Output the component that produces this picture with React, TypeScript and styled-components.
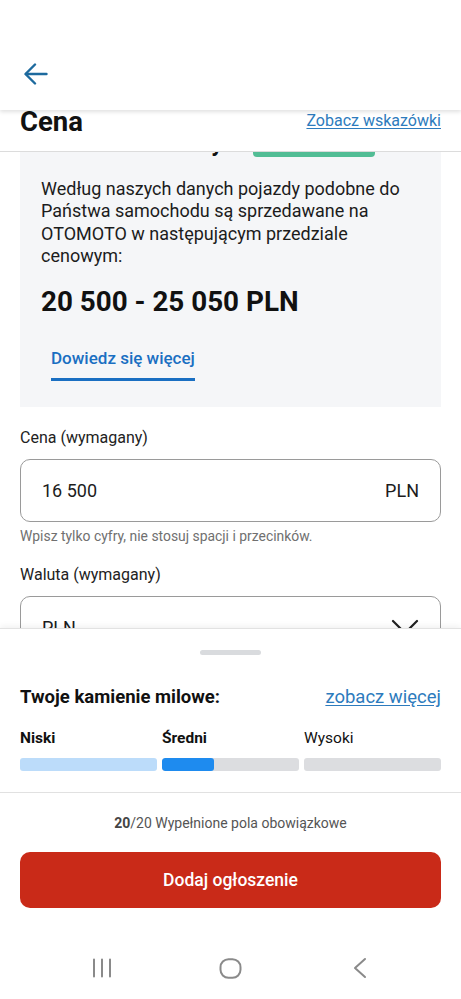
import { useLayoutEffect, useRef } from 'react';
import styled, { createGlobalStyle } from 'styled-components';

const GlobalStyle = createGlobalStyle`
  html, body {
    margin: 0;
    padding: 0;
    background: #ffffff;
  }
  * {
    box-sizing: border-box;
  }
  body {
    font-family: Roboto, 'Noto Sans', 'Liberation Sans', sans-serif;
    color: #1a1a1a;
  }
`;

const Screen = styled.div`
  width: 461px;
  height: 999px;
  display: flex;
  flex-direction: column;
  overflow: hidden;
  background: #ffffff;
`;

const Header = styled.header`
  height: 110px;
  flex-shrink: 0;
  display: flex;
  align-items: flex-end;
  padding: 0 0 23px 22px;
  background: #ffffff;
  box-shadow: 0 2px 4px rgba(0, 0, 0, 0.12);
  position: relative;
  z-index: 2;
`;

const BackButton = styled.button`
  border: none;
  background: none;
  padding: 0;
  width: 28px;
  height: 26px;
  display: flex;
  align-items: center;
  justify-content: center;
  color: #1d6a9e;
`;

const TitleBar = styled.div`
  height: 42px;
  flex-shrink: 0;
  display: flex;
  justify-content: space-between;
  align-items: flex-start;
  padding: 0 20px;
  background: #ffffff;
  border-bottom: 1px solid #dcdcdc;
  position: relative;
  z-index: 1;
`;

const PageTitle = styled.h1`
  margin: 0;
  font-size: 27.5px;
  line-height: 24px;
  font-weight: 700;
  color: #111;
`;

const TextLink = styled.a<{ size: number }>`
  font-size: ${({ size }) => size}px;
  line-height: 22px;
  color: #2d7bbd;
  text-decoration: underline;
  text-underline-offset: 2px;
  cursor: pointer;
`;

const ScrollArea = styled.div`
  flex: 1;
  overflow: hidden;
  padding: 0 20px;
`;

const InfoCard = styled.section`
  background: #f5f6f8;
  padding: 20px 21px 26px;
  display: flex;
  flex-direction: column;
`;

const CardHeading = styled.div`
  height: 30px;
  display: flex;
  align-items: flex-end;
  gap: 30px;
  margin-bottom: 21px;
`;

const CardTitle = styled.h2`
  margin: 0;
  font-size: 23px;
  line-height: 26px;
  font-weight: 700;
  color: #111;
`;

const Badge = styled.span`
  width: 122px;
  height: 26px;
  border-radius: 4px;
  background: #52bd95;
  color: #ffffff;
  font-size: 14px;
  font-weight: 500;
  display: flex;
  align-items: center;
  justify-content: center;
`;

const Paragraph = styled.p`
  margin: 0;
  font-size: 18px;
  line-height: 22.4px;
  color: #1c1c1c;
`;

const PriceRange = styled.div`
  margin-top: 19px;
  font-size: 27.8px;
  line-height: 30px;
  font-weight: 700;
  color: #111;
`;

const TabLink = styled.div`
  align-self: flex-start;
  margin: 30px 0 0 10px;
  padding-bottom: 9px;
  border-bottom: 3px solid #1a6fc2;
  font-size: 17px;
  line-height: 22px;
  font-weight: 500;
  color: #1a6fc2;
`;

const Field = styled.div`
  display: flex;
  flex-direction: column;
  margin-top: 21px;
`;

const FieldLabel = styled.label`
  font-size: 16px;
  line-height: 20px;
  color: #222;
  margin-bottom: 11px;
`;

const InputBox = styled.div`
  height: 63px;
  border: 1px solid #9a9a9a;
  border-radius: 10px;
  display: flex;
  align-items: center;
  justify-content: space-between;
  padding: 0 21px 0 21px;
  font-size: 18px;
  color: #1c1c1c;
`;

const Helper = styled.div`
  margin-top: 6px;
  font-size: 13.9px;
  line-height: 16px;
  color: #707070;
`;

const Sheet = styled.div`
  height: 371px;
  flex-shrink: 0;
  display: flex;
  flex-direction: column;
  background: #ffffff;
  border-top: 1px solid #e2e2e2;
  box-shadow: 0 -2px 6px rgba(0, 0, 0, 0.06);
  position: relative;
  z-index: 1;
`;

const Handle = styled.div`
  width: 61px;
  height: 5px;
  border-radius: 3px;
  background: #d9dbde;
  margin: 21px auto 0;
`;

const MilestoneHead = styled.div`
  display: flex;
  justify-content: space-between;
  align-items: center;
  padding: 0 20px;
  margin-top: 31px;
`;

const MilestoneTitle = styled.h3`
  margin: 0;
  font-size: 18.5px;
  line-height: 22px;
  font-weight: 700;
  color: #111;
`;

const Levels = styled.div`
  display: grid;
  grid-template-columns: repeat(3, 1fr);
  column-gap: 5px;
  row-gap: 11px;
  padding: 0 20px;
  margin-top: 21px;
`;

const LevelLabel = styled.div<{ done: boolean }>`
  font-size: 15.5px;
  line-height: 18px;
  font-weight: ${({ done }) => (done ? 700 : 400)};
  color: #111;
`;

const Bar = styled.div<{ tone: string }>`
  height: 13px;
  border-radius: 3px;
  background: ${({ tone }) => tone};
  overflow: hidden;
`;

const BarFill = styled.div`
  height: 100%;
  background: #1e8bef;
  border-radius: 3px;
`;

const Divider = styled.div`
  height: 1px;
  background: #e1e1e1;
  margin-top: 21px;
`;

const Progress = styled.div`
  text-align: center;
  font-size: 14px;
  line-height: 18px;
  color: #555;
  margin-top: 21px;

  b {
    font-weight: 700;
    color: #444;
  }
`;

const SubmitButton = styled.button`
  margin: 20px 20px 0;
  height: 56px;
  border: none;
  border-radius: 10px;
  background: #c92a18;
  color: #ffffff;
  font-family: inherit;
  font-size: 17.5px;
  font-weight: 500;
`;

const NavBar = styled.nav`
  margin-top: auto;
  height: 60px;
  display: grid;
  grid-template-columns: repeat(3, 129px);
  justify-content: center;
  justify-items: center;
  align-items: center;
  padding-bottom: 2px;
`;

const levels = [
  { label: 'Niski', done: true, tone: '#bcdcfa', fill: 0 },
  { label: 'Średni', done: true, tone: '#dcdde0', fill: 38 },
  { label: 'Wysoki', done: false, tone: '#dcdde0', fill: 0 },
];

const App = () => {
  const scrollRef = useRef<HTMLDivElement>(null);

  useLayoutEffect(() => {
    if (scrollRef.current) scrollRef.current.scrollTop = 45;
  }, []);

  return (
    <Screen>
      <GlobalStyle />
      <Header>
        <BackButton aria-label="Wstecz">
          <svg width="24" height="22" viewBox="0 0 24 22" fill="none" stroke="currentColor" strokeWidth="2.4" strokeLinecap="round" strokeLinejoin="round">
            <path d="M22.5 11H2" />
            <path d="M11 1.5L1.5 11 11 20.5" />
          </svg>
        </BackButton>
      </Header>

      <TitleBar>
        <PageTitle>Cena</PageTitle>
        <TextLink size={16}>Zobacz wskazówki</TextLink>
      </TitleBar>

      <ScrollArea ref={scrollRef}>
        <InfoCard>
          <CardHeading>
            <CardTitle>Przedział cenowy</CardTitle>
            <Badge>Nowość</Badge>
          </CardHeading>
          <Paragraph>
            Według naszych danych pojazdy podobne do Państwa samochodu są sprzedawane na
            OTOMOTO w następującym przedziale cenowym:
          </Paragraph>
          <PriceRange>20 500 - 25 050 PLN</PriceRange>
          <TabLink>Dowiedz się więcej</TabLink>
        </InfoCard>

        <Field>
          <FieldLabel>Cena (wymagany)</FieldLabel>
          <InputBox>
            <span>16 500</span>
            <span>PLN</span>
          </InputBox>
          <Helper>Wpisz tylko cyfry, nie stosuj spacji i przecinków.</Helper>
        </Field>

        <Field>
          <FieldLabel>Waluta (wymagany)</FieldLabel>
          <InputBox>
            <span>PLN</span>
            <svg width="28" height="16" viewBox="0 0 28 16" fill="none" stroke="#222" strokeWidth="2.2" strokeLinecap="round">
              <path d="M2 2l12 12L26 2" />
            </svg>
          </InputBox>
        </Field>
      </ScrollArea>

      <Sheet>
        <Handle />
        <MilestoneHead>
          <MilestoneTitle>Twoje kamienie milowe:</MilestoneTitle>
          <TextLink size={18.5}>zobacz więcej</TextLink>
        </MilestoneHead>
        <Levels>
          {levels.map((l) => (
            <LevelLabel key={l.label} done={l.done}>
              {l.label}
            </LevelLabel>
          ))}
          {levels.map((l) => (
            <Bar key={l.label} tone={l.tone}>
              {l.fill > 0 && <BarFill style={{ width: `${l.fill}%` }} />}
            </Bar>
          ))}
        </Levels>
        <Divider />
        <Progress>
          <b>20</b>/20 Wypełnione pola obowiązkowe
        </Progress>
        <SubmitButton>Dodaj ogłoszenie</SubmitButton>
        <NavBar>
          <svg width="20" height="20" viewBox="0 0 20 20" stroke="#8a8a8a" strokeWidth="2" strokeLinecap="round">
            <path d="M2 1.5v17M10 1.5v17M18 1.5v17" />
          </svg>
          <svg width="23" height="21" viewBox="0 0 23 21" fill="none" stroke="#8a8a8a" strokeWidth="2">
            <rect x="1.5" y="1.2" width="20" height="18.6" rx="8" />
          </svg>
          <svg width="16" height="22" viewBox="0 0 16 22" fill="none" stroke="#8a8a8a" strokeWidth="2" strokeLinecap="round" strokeLinejoin="round">
            <path d="M13 2L3 11l10 9" />
          </svg>
        </NavBar>
      </Sheet>
    </Screen>
  );
};

export default App;
